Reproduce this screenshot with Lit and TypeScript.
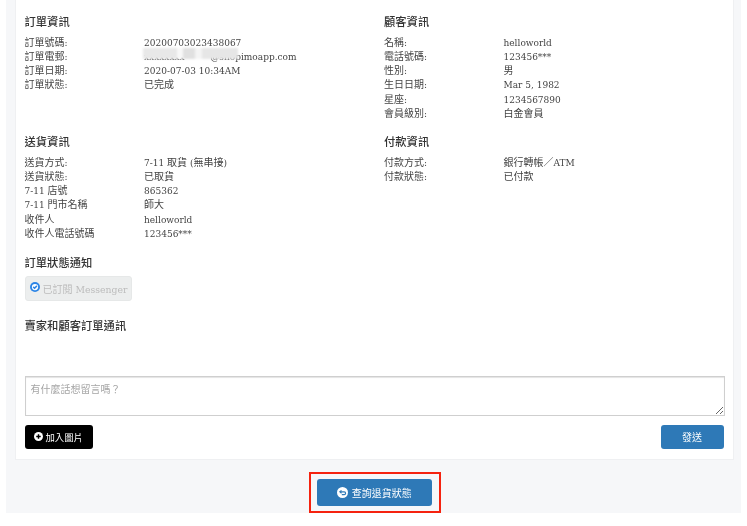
import { LitElement, html, css } from "lit";
import { customElement } from "lit/decorators.js";

type Row = [string, string];
interface Section {
  title: string;
  rows: Row[];
}

const sections: Section[] = [
  {
    title: "訂單資訊",
    rows: [
      ["訂單號碼:", "20200703023438067"],
      ["訂單電郵:", "EMAIL"],
      ["訂單日期:", "2020-07-03 10:34AM"],
      ["訂單狀態:", "已完成"],
    ],
  },
  {
    title: "顧客資訊",
    rows: [
      ["名稱:", "helloworld"],
      ["電話號碼:", "123456***"],
      ["性別:", "男"],
      ["生日日期:", "Mar 5, 1982"],
      ["星座:", "1234567890"],
      ["會員級別:", "白金會員"],
    ],
  },
  {
    title: "送貨資訊",
    rows: [
      ["送貨方式:", "7-11 取貨 (無串接)"],
      ["送貨狀態:", "已取貨"],
      ["7-11 店號", "865362"],
      ["7-11 門市名稱", "師大"],
      ["收件人", "helloworld"],
      ["收件人電話號碼", "123456***"],
    ],
  },
  {
    title: "付款資訊",
    rows: [
      ["付款方式:", "銀行轉帳／ATM"],
      ["付款狀態:", "已付款"],
    ],
  },
];

/** CJK runs are set one pixel larger than the Latin text beside them. */
const mixed = (text: string) =>
  text
    .split(/([\u3000-\u9fff\uff00-\uffef]+)/)
    .map((part, i) => (i % 2 ? html`<span class="cjk">${part}</span>` : part));

@customElement("app-root")
export class AppRoot extends LitElement {
  static styles = css`
    :host {
      display: block;
      width: 747px;
      height: 526px;
      background: #fff;
      font-family: "DejaVu Serif", "Noto Sans CJK TC", serif;
      font-size: 9px;
      color: #444;
      overflow: hidden;
    }
    .cjk {
      font-size: 10px;
    }
    .panel {
      margin: 0 6px;
      width: 735px;
      height: 513px;
      background: #f6f7f9;
      box-sizing: border-box;
      padding: 0 7px 0 8.5px;
      filter: blur(0.3px);
    }
    .card {
      height: 460px;
      box-sizing: border-box;
      background: #fff;
      border: 1px solid #eff0f2;
      border-top: 0;
      padding: 15px 9.5px 0 9px;
    }
    .cols {
      display: grid;
      grid-template-columns: 359.5px 1fr;
      grid-auto-rows: 120px;
    }
    h3 {
      margin: 0 0 4.5px;
      font-size: 11.3px;
      line-height: 16px;
      font-weight: 500;
      color: #333;
    }
    .row {
      display: grid;
      grid-template-columns: 119.5px 1fr;
      height: 14.3px;
      line-height: 14.3px;
      white-space: nowrap;
    }
    .email {
      position: relative;
    }
    .smudge {
      position: absolute;
      left: -1px;
      top: -2px;
      width: 95px;
      height: 11.5px;
      background: linear-gradient(
        90deg,
        #e8e8e8 0 36%,
        #f8f8f8 36% 42%,
        #e0e0e0 42% 55%,
        #f4f4f4 55% 62%,
        #e6e6e6 62% 100%
      );
      filter: blur(1px);
    }
    .notify {
      margin: 0.5px 0 4px;
    }
    .badge {
      margin-top: 4px;
      width: 107px;
      height: 25px;
      box-sizing: border-box;
      background: #eceeee;
      border: 1px solid #e6e8e8;
      border-radius: 3px;
      display: flex;
      align-items: center;
      gap: 3px;
      padding-left: 4px;
      color: #bcbcbc;
      font-size: 9.3px;
    }
    .badge svg {
      margin-top: -3px;
    }
    .chat {
      margin: 18px 0 4px;
    }
    textarea {
      display: block;
      margin-top: 41px;
      width: 700px;
      height: 40.5px;
      box-sizing: border-box;
      border: 1px solid #cfcfcf;
      box-shadow: inset 0 1px 1px #e4e4e4;
      padding: 4px 5px;
      font: inherit;
      font-size: 10px;
      color: #444;
      resize: vertical;
      border-radius: 0;
      outline: none;
    }
    textarea::placeholder {
      color: #a5a5a5;
      opacity: 1;
    }
    .actions {
      display: flex;
      justify-content: space-between;
      margin-top: 8.5px;
    }
    .btn {
      height: 24px;
      border-radius: 3px;
      border: 0;
      box-sizing: border-box;
      display: flex;
      align-items: center;
      justify-content: center;
      gap: 2.5px;
      font: inherit;
      font-size: 9.4px;
      color: #fff;
      padding: 0;
    }
    .add {
      width: 68px;
      background: #000;
    }
    .send {
      width: 63px;
      background: #2e79b7;
      font-size: 10px;
    }
    .foot {
      display: flex;
      justify-content: center;
      margin-top: 12px;
      padding-left: 1px;
    }
    .outline {
      width: 132px;
      height: 41px;
      box-sizing: border-box;
      border: 2px solid #f5220f;
      display: flex;
      align-items: center;
      justify-content: center;
    }
    .track {
      width: 115px;
      height: 27px;
      margin-left: -1px;
      background: #2e79b7;
      gap: 4px;
      font-size: 10px;
    }
  `;

  private renderSection(s: Section) {
    return html`<section>
      <h3>${s.title}</h3>
      ${s.rows.map(
        ([k, v]) => html`<div class="row">
          <span>${mixed(k)}</span>
          ${v === "EMAIL"
            ? html`<span class="email"
                >xxxxxxxx &nbsp; &nbsp; &nbsp; &nbsp; @shopimoapp.com<i class="smudge"></i
              ></span>`
            : html`<span>${mixed(v)}</span>`}
        </div>`
      )}
    </section>`;
  }

  render() {
    return html`<div class="panel">
      <div class="card">
        <div class="cols">${sections.map((s) => this.renderSection(s))}</div>
        <h3 class="notify">訂單狀態通知</h3>
        <div class="badge">
          <svg width="10" height="10" viewBox="0 0 16 16">
            <circle cx="8" cy="8" r="8" fill="#2c85e6" />
            <circle cx="8" cy="8" r="5" fill="#fff" />
            <path d="M5.2 7.8l2.2 2.2L11 6.2" fill="none" stroke="#2c85e6" stroke-width="2.4" />
          </svg>
          <span>${mixed("已訂閱 Messenger")}</span>
        </div>
        <h3 class="chat">賣家和顧客訂單通訊</h3>
        <textarea placeholder="有什麼話想留言嗎？"></textarea>
        <div class="actions">
          <button class="btn add">
            <svg width="9" height="9" viewBox="0 0 16 16">
              <circle cx="8" cy="8" r="8" fill="#fff" />
              <path d="M8 4v8M4 8h8" stroke="#000" stroke-width="2.6" />
            </svg>
            加入圖片
          </button>
          <button class="btn send">發送</button>
        </div>
      </div>
      <div class="foot">
        <div class="outline">
          <button class="btn track">
            <svg width="11" height="11" viewBox="0 0 16 16">
              <circle cx="8" cy="8" r="8" fill="#fff" />
              <path d="M4.5 7H10.5a2 2 0 0 1 0 4H7" fill="none" stroke="#2e79b7" stroke-width="1.7" />
              <path d="M6.6 5L4.2 7l2.4 2" fill="none" stroke="#2e79b7" stroke-width="1.7" />
            </svg>
            查詢退貨狀態
          </button>
        </div>
      </div>
    </div>`;
  }
}
